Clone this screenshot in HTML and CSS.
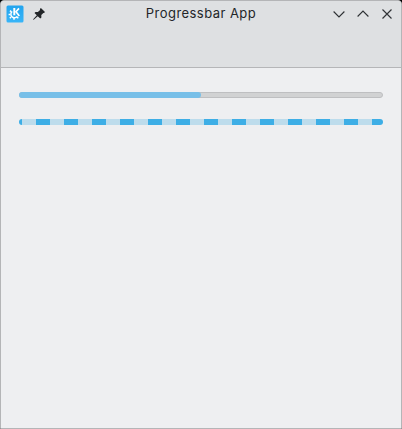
FILE: index.html
```html
<!DOCTYPE html>
<html lang="en">
<head>
<meta charset="utf-8">
<title>Progressbar App</title>
<link rel="stylesheet" href="styles.css">
</head>
<body>
<div class="window">
  <header class="header">
    <div class="side">
      <svg class="logo" width="18" height="18" viewBox="0 0 18 18">
        <defs><linearGradient id="blue" x1="0" y1="0" x2="0" y2="1"><stop offset="0" stop-color="#22a4ee"/><stop offset="1" stop-color="#38b5f8"/></linearGradient></defs>
        <rect x=".5" y=".5" width="17" height="17" rx="1.500" fill="url(#blue)"/>
        <path d="M6.200 6.400A3.600 3.600 0 1 0 11.300 11.400" fill="none" stroke="#fff" stroke-width="1.500"/>
        <path d="M5 6.600l-1-1M4 9.500H2.600M5 12l-1.200 1.200M8 13v1.800M11 12l1.300 1.300" stroke="#fff" stroke-width="1.500"/>
        <path d="M8.300 3v7.300" stroke="#fff" stroke-width="2"/>
        <path d="M13 3.400L10 6.700l3.300 4.300" fill="none" stroke="#fff" stroke-width="1.700"/>
      </svg>
      <svg class="pin" width="14" height="14" viewBox="0 0 14 14">
        <path d="M8.900 1l4.100 4-1 1-.6-.1-2.100 2.200.1 2.300-1.100 1L5.700 9.200 2 12.600l-.9.300.3-.9L4.800 8.300 2.500 6l1-1.100 2.400.1L8.100 2.900 7.900 2z" fill="#232629"/>
      </svg>
    </div>
    <div class="title">Progressbar App</div>
    <div class="side buttons">
      <svg width="12" height="12" viewBox="0 0 12 12"><path d="M.6 3.500L6 8.900l5.400-5.400"/></svg>
      <svg width="12" height="12" viewBox="0 0 12 12"><path d="M.6 8.500L6 3.100l5.400 5.400"/></svg>
      <svg width="12" height="12" viewBox="0 0 12 12"><path d="M1.500 1.500l9 9M10.500 1.500l-9 9"/></svg>
    </div>
  </header>
  <main class="content">
    <div class="bar track"><div class="fill"></div></div>
    <div class="bar busy"></div>
  </main>
</div>
</body>
</html>
```
FILE: styles.css
```css
* { box-sizing: border-box; }
body { margin: 0; background: #000; }
.window {
  width: 402px;
  height: 429px;
  border: 1px solid #b4b5b7;
  border-radius: 4px 4px 0 0;
  background: #eeeff1;
  overflow: hidden;
}
.header {
  display: flex;
  justify-content: space-between;
  align-items: flex-start;
  height: 67px;
  padding: 0 8px 0 5px;
  background: #dee0e2;
  border-bottom: 1px solid #b5b6b8;
}
.side {
  display: flex;
  align-items: center;
  gap: 8px;
  width: 62px;
  height: 26px;
}
.buttons { justify-content: flex-end; gap: 12px; }
.buttons svg { flex: none; }
.buttons path { fill: none; stroke: #303336; stroke-width: 1.15; }
.title {
  padding-left: 3px;
  font: 13px/24px Inter, "Noto Sans", sans-serif;
  letter-spacing: .45px;
  color: #232629;
  white-space: nowrap;
}
.content {
  display: flex;
  flex-direction: column;
  gap: 21px;
  padding: 24px 18px;
}
.bar { height: 6px; border-radius: 3px; }
.track { background: #d1d2d3; border: 1px solid #bebfc1; }
.fill {
  width: 182px;
  height: 6px;
  margin: -1px 0 0 -1px;
  border-radius: 3px;
  background: #77bfe8;
}
.busy {
  background: repeating-linear-gradient(90deg, #3daee6 0 14px, #bddcec 14px 28px) -11px 0 / 392px 6px;
}
```
